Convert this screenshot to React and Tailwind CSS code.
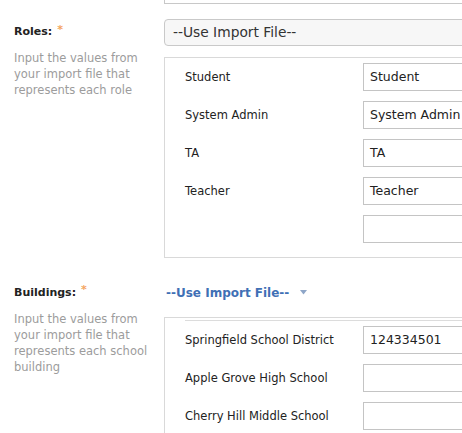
const roles = [
  { label: 'Student', value: 'Student' },
  { label: 'System Admin', value: 'System Admin' },
  { label: 'TA', value: 'TA' },
  { label: 'Teacher', value: 'Teacher' },
  { label: '', value: '' },
];

const buildings = [
  { label: 'Springfield School District', value: '124334501' },
  { label: 'Apple Grove High School', value: '' },
  { label: 'Cherry Hill Middle School', value: '' },
];

export default function App() {
  return (
    <div
      className="relative w-[462px] h-[433px] overflow-hidden bg-white text-[#333]"
      style={{ fontFamily: '"DejaVu Sans", "Lucida Grande", sans-serif' }}
    >
      <div className="ml-[164px] h-[4px] w-[400px] border border-t-0 border-[#c8c8c8]" />

      {/* Roles */}
      <div className="mt-[15px] flex">
        <div className="w-[164px] shrink-0 pl-[14px]">
          <FieldLabel text="Roles:" h="h-[27px]" />
          <p className="mt-[4px] text-[11.5px] leading-[16px] text-[#9c9c9c] w-[140px]">
            Input the values from your import file that represents each role
          </p>
        </div>
        <div className="w-[340px] shrink-0">
          <div className="h-[27px] flex items-center px-[8px] rounded-[4px] border border-[#c9c9c9] bg-[#f7f7f7] text-[13.8px] text-[#333]">
            --Use Import File--
          </div>
          <div className="mt-[11px] border border-[#d9d9d9] pt-[5px] pb-[14px]">
            {roles.map((r, i) => (
              <Row key={i} {...r} last={i === roles.length - 1} />
            ))}
          </div>
        </div>
      </div>

      {/* Buildings */}
      <div className="mt-[25px] flex">
        <div className="w-[164px] shrink-0 pl-[14px]">
          <FieldLabel text="Buildings:" h="h-[20px]" />
          <p className="mt-[8px] text-[11.5px] leading-[16px] text-[#9c9c9c] w-[140px]">
            Input the values from your import file that represents each school building
          </p>
        </div>
        <div className="w-[340px] shrink-0">
          <div className="h-[20px] flex items-center pl-[2px] gap-[11px]">
            <span className="text-[12px] font-bold text-[#3f70b5]">--Use Import File--</span>
            <svg width="7" height="5" viewBox="0 0 7 5" className="mt-[-1px]">
              <path d="M0 0 L7 0 L3.5 4.5 Z" fill="#8ea6c8" />
            </svg>
          </div>
          <div className="mt-[14px] border border-[#d9d9d9] pt-[2px]">
            <div className="ml-[20px] border-t border-[#dcdcdc] pt-[5px]">
              {buildings.map((b, i) => (
                <Row key={i} {...b} inner />
              ))}
            </div>
          </div>
        </div>
      </div>
    </div>
  );
}

function FieldLabel({ text, h }) {
  return (
    <div className={`${h} flex items-center text-[11px] font-bold text-[#222]`}>
      {text}
      <span className="ml-[5px] mt-[-5px] text-[11px] text-[#f4a460]">*</span>
    </div>
  );
}

function Row({ label, value, last, inner }) {
  return (
    <div className={`flex items-center h-[28px] ${last ? '' : 'mb-[10px]'} ${inner ? '' : 'pl-[20px]'}`}>
      <div className="w-[178px] shrink-0 pt-[2px] text-[11.5px] text-[#222]">{label}</div>
      <div className="w-[150px] h-[28px] flex items-center px-[6px] pt-[1px] border border-[#c4c4c4] bg-white text-[12.5px] text-[#222]">
        {value}
      </div>
    </div>
  );
}
